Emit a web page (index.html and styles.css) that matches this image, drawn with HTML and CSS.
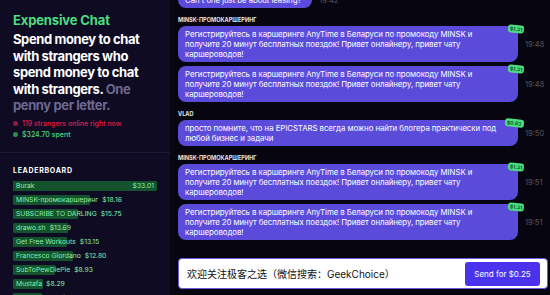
FILE: index.html
```html
<!DOCTYPE html>
<html lang="en">
<head>
    <meta charset="UTF-8">
    <meta name="viewport" content="width=device-width, initial-scale=1.0">
    <title>Expensive Chat</title>
    <link rel="stylesheet" href="styles.css">
</head>
<body>
    <div class="app">
        <aside class="sidebar">
            <div class="intro">
                <h1 class="brand">Expensive Chat</h1>
                <p class="pitch">Spend money to chat with strangers who spend money to chat with strangers. <span class="muted">One penny per letter.</span></p>
                <ul class="stats">
                    <li class="stat online"><span class="dot"></span>119 strangers online right now</li>
                    <li class="stat spent"><span class="dot"></span>$324.70 spent</li>
                </ul>
            </div>

            <div class="leaderboard">
                <h2>Leaderboard</h2>
                <ol class="board">
                    <li class="bar" style="width: 100%"><span>Burak</span><span>$33.01</span></li>
                    <li class="bar" style="width: 53.5%"><span>MINSK-промокаршеринг</span><span>$18.16</span></li>
                    <li class="bar" style="width: 45%"><span>SUBSCRIBE TO DARLING</span><span>$15.75</span></li>
                    <li class="bar" style="width: 38%"><span>drawo.sh</span><span>$13.69</span></li>
                    <li class="bar" style="width: 37.5%"><span>Get Free Workouts</span><span>$13.15</span></li>
                    <li class="bar" style="width: 42%"><span>Francesco Giordano</span><span>$12.80</span></li>
                    <li class="bar" style="width: 29%"><span>SubToPewDiePie</span><span>$8.93</span></li>
                    <li class="bar" style="width: 21%"><span>Mustafa</span><span>$8.29</span></li>
                    <li class="bar" style="width: 20%"><span>Bleed Money</span><span>$7.64</span></li>
                </ol>
            </div>
        </aside>

        <main class="chat">
            <div class="messages">
                <div class="sender">anon</div>
                <div class="msg">
                    <div class="bubble">Can't one just be about leasing?<span class="price">$0.32</span></div>
                    <span class="time">19:42</span>
                </div>

                <div class="sender">MINSK-промокаршеринг</div>
                <div class="msg">
                    <div class="bubble">Регистрируйтесь в каршеринге AnyTime в Беларуси по промокоду MINSK и получите 20 минут бесплатных поездок! Привет онлайнеру, привет чату каршероводов!<span class="price">$1.31</span></div>
                    <span class="time">19:48</span>
                </div>
                <div class="msg">
                    <div class="bubble">Регистрируйтесь в каршеринге AnyTime в Беларуси по промокоду MINSK и получите 20 минут бесплатных поездок! Привет онлайнеру, привет чату каршероводов!<span class="price">$1.31</span></div>
                    <span class="time">19:48</span>
                </div>

                <div class="sender">Vlad</div>
                <div class="msg">
                    <div class="bubble">просто помните, что на EPICSTARS всегда можно найти блогера практически под любой бизнес и задачи<span class="price">$0.83</span></div>
                    <span class="time">19:50</span>
                </div>

                <div class="sender">MINSK-промокаршеринг</div>
                <div class="msg">
                    <div class="bubble">Регистрируйтесь в каршеринге AnyTime в Беларуси по промокоду MINSK и получите 20 минут бесплатных поездок! Привет онлайнеру, привет чату каршероводов!<span class="price">$1.31</span></div>
                    <span class="time">19:51</span>
                </div>
                <div class="msg">
                    <div class="bubble">Регистрируйтесь в каршеринге AnyTime в Беларуси по промокоду MINSK и получите 20 минут бесплатных поездок! Привет онлайнеру, привет чату каршероводов!<span class="price">$1.31</span></div>
                    <span class="time">19:51</span>
                </div>
            </div>

            <form class="composer" onsubmit="return false">
                <input class="field" type="text" value="欢迎关注极客之选（微信搜索：GeekChoice）">
                <button class="send" type="submit">Send for $0.25</button>
            </form>
        </main>
    </div>
</body>
</html>
```

FILE: styles.css
```css
body {
    margin: 0;
    font-family: Inter, "Noto Sans CJK SC", sans-serif;
    background-color: #07050f;
    color: #fff;
}
.app {
    display: flex;
    height: 100vh;
    overflow: hidden;
}
.sidebar {
    width: 170px;
    flex-shrink: 0;
    background-color: #0e0b22;
    display: flex;
    flex-direction: column;
}
.intro {
    padding: 12px 13px 12px;
    border-bottom: 1px solid #1d1935;
}
.brand {
    margin: 0;
    font-size: 13px;
    line-height: 16px;
    font-weight: 700;
    color: #4ade80;
    letter-spacing: -0.01em;
}
.pitch {
    margin: 3px 0 0;
    font-size: 13px;
    line-height: 16.5px;
    font-weight: 700;
    letter-spacing: -0.03em;
}
.muted {
    color: #6d6890;
}
.stats {
    list-style: none;
    margin: 4px 0 0;
    padding: 0;
    font-size: 7px;
    line-height: 11px;
    font-weight: 500;
}
.stat {
    display: flex;
    align-items: center;
}
.dot {
    width: 5px;
    height: 5px;
    border-radius: 50%;
    margin-right: 4px;
}
.online {
    color: #e11d48;
}
.online .dot {
    background-color: #8f1d3f;
}
.spent {
    color: #4ade80;
}
.spent .dot {
    background-color: #2f8a50;
}
.leaderboard {
    padding: 13px 13px 0;
}
.leaderboard h2 {
    margin: 0 0 6px;
    font-size: 7px;
    line-height: 9px;
    font-weight: 700;
    text-transform: uppercase;
    letter-spacing: 0.1em;
}
.board {
    list-style: none;
    margin: 0;
    padding: 0;
}
.bar {
    display: flex;
    justify-content: space-between;
    gap: 4px;
    height: 10px;
    margin-bottom: 4px;
    padding: 0 3px;
    box-sizing: border-box;
    background-color: #14532d;
    border-radius: 1px;
    color: #86efac;
    font-size: 6.8px;
    line-height: 10px;
    white-space: nowrap;
}
.chat {
    flex: 1;
    min-width: 0;
    display: flex;
    flex-direction: column;
}
.messages {
    flex: 1;
    display: flex;
    flex-direction: column;
    justify-content: flex-end;
    overflow: hidden;
    padding: 0 2px 0 8px;
}
.sender {
    margin: 4px 0 2px;
    font-size: 5.6px;
    line-height: 8px;
    font-weight: 700;
    text-transform: uppercase;
    color: #e4e4e7;
}
.msg {
    display: flex;
    align-items: center;
    margin-bottom: 4px;
}
.msg:last-child {
    margin-bottom: 0;
}
.bubble {
    position: relative;
    max-width: 322px;
    padding: 3px 11px 3px 7px;
    background-color: #5b4bdb;
    border-radius: 8px;
    font-size: 7.85px;
    line-height: 10px;
    letter-spacing: -0.01em;
}
.price {
    position: absolute;
    top: -1px;
    right: -6px;
    padding: 1px 2px;
    background-color: #4ade80;
    color: #14532d;
    border-radius: 3px;
    font-size: 5px;
    line-height: 6px;
    font-weight: 700;
    letter-spacing: 0;
    transform: rotate(6deg);
}
.time {
    flex-shrink: 0;
    margin-left: 7px;
    font-size: 7.5px;
    color: #55555f;
}
.composer {
    display: flex;
    align-items: center;
    height: 31px;
    box-sizing: border-box;
    margin: 18px 2px 6px 8px;
    padding: 3px 7px 3px 8px;
    background-color: #fff;
    border: 1px solid #6a5ae0;
    border-radius: 4px;
}
.field {
    flex: 1;
    min-width: 0;
    border: none;
    outline: none;
    padding: 0;
    font-family: Inter, "Noto Sans CJK SC", sans-serif;
    font-size: 10px;
    color: #111;
    background: none;
}
.send {
    width: 75px;
    height: 24px;
    padding: 0;
    border: none;
    border-radius: 3px;
    background-color: #4b33ee;
    color: #fff;
    font-family: Inter, sans-serif;
    font-size: 8px;
    white-space: nowrap;
    cursor: pointer;
}
```
